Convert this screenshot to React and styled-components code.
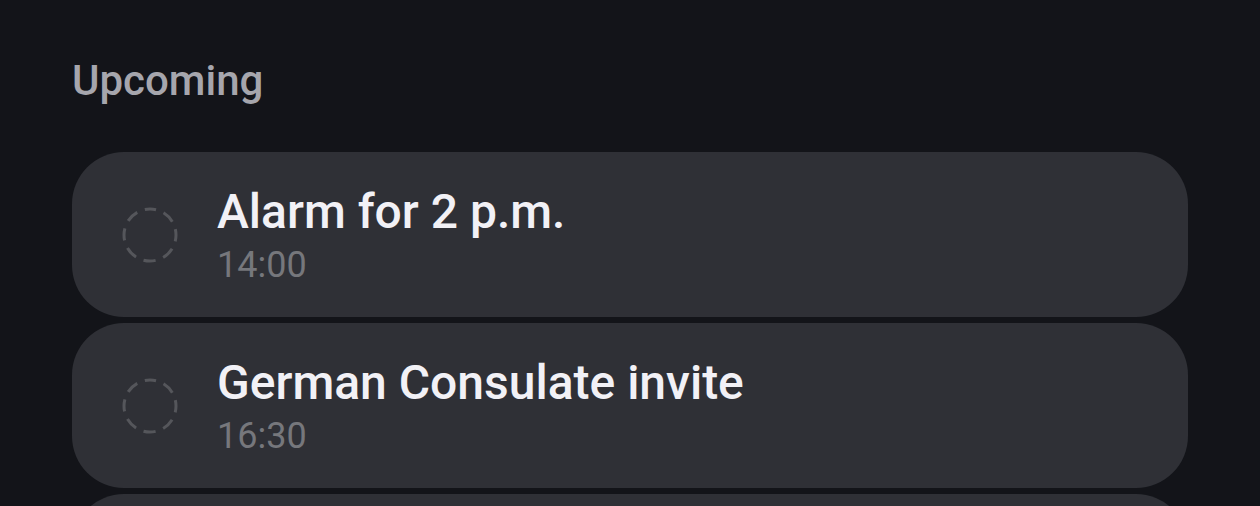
import React from "react";
import styled, { createGlobalStyle } from "styled-components";

const GlobalStyle = createGlobalStyle`
  html, body {
    margin: 0;
    padding: 0;
    background: #131419;
  }
  body {
    font-family: Roboto, "Noto Sans", sans-serif;
    -webkit-font-smoothing: antialiased;
  }
`;

const Page = styled.div`
  width: 1260px;
  height: 506px;
  overflow: hidden;
  padding: 56px 72px 0;
  box-sizing: border-box;
`;

const Heading = styled.h2`
  margin: 0 0 46px;
  font-size: 42px;
  font-weight: 500;
  line-height: 50px;
  color: #a6a6ad;
`;

const List = styled.div`
  display: flex;
  flex-direction: column;
  gap: 6px;
`;

const Card = styled.div`
  display: flex;
  align-items: center;
  height: 165px;
  border-radius: 52px;
  background: #2f3036;
  padding-left: 50px;
  box-sizing: border-box;
`;

const IconWrap = styled.div`
  width: 56px;
  height: 56px;
  flex-shrink: 0;
  margin-right: 39px;
  display: flex;
`;

const TextBlock = styled.div`
  display: flex;
  flex-direction: column;
`;

const Title = styled.div`
  font-size: 48px;
  font-weight: 500;
  line-height: 54px;
  color: #f2f1f6;
`;

const Time = styled.div`
  margin-top: 6px;
  font-size: 36px;
  font-weight: 400;
  line-height: 40px;
  color: #76777c;
`;

const DashedCircle = () => (
  <svg width="56" height="56" viewBox="0 0 56 56">
    <circle
      cx="28"
      cy="28"
      r="26"
      fill="none"
      stroke="#55565b"
      strokeWidth="3"
      strokeDasharray="12.4 8"
      strokeDashoffset="6.2"
      transform="rotate(-90 28 28)"
    />
  </svg>
);

const items = [
  { title: "Alarm for 2 p.m.", time: "14:00" },
  { title: "German Consulate invite", time: "16:30" },
  { title: "", time: "" },
];

export default function App() {
  return (
    <>
      <GlobalStyle />
      <Page>
        <Heading>Upcoming</Heading>
        <List>
          {items.map((it, i) => (
            <Card key={i}>
              {it.title && (
                <>
                  <IconWrap>
                    <DashedCircle />
                  </IconWrap>
                  <TextBlock>
                    <Title>{it.title}</Title>
                    <Time>{it.time}</Time>
                  </TextBlock>
                </>
              )}
            </Card>
          ))}
        </List>
      </Page>
    </>
  );
}
